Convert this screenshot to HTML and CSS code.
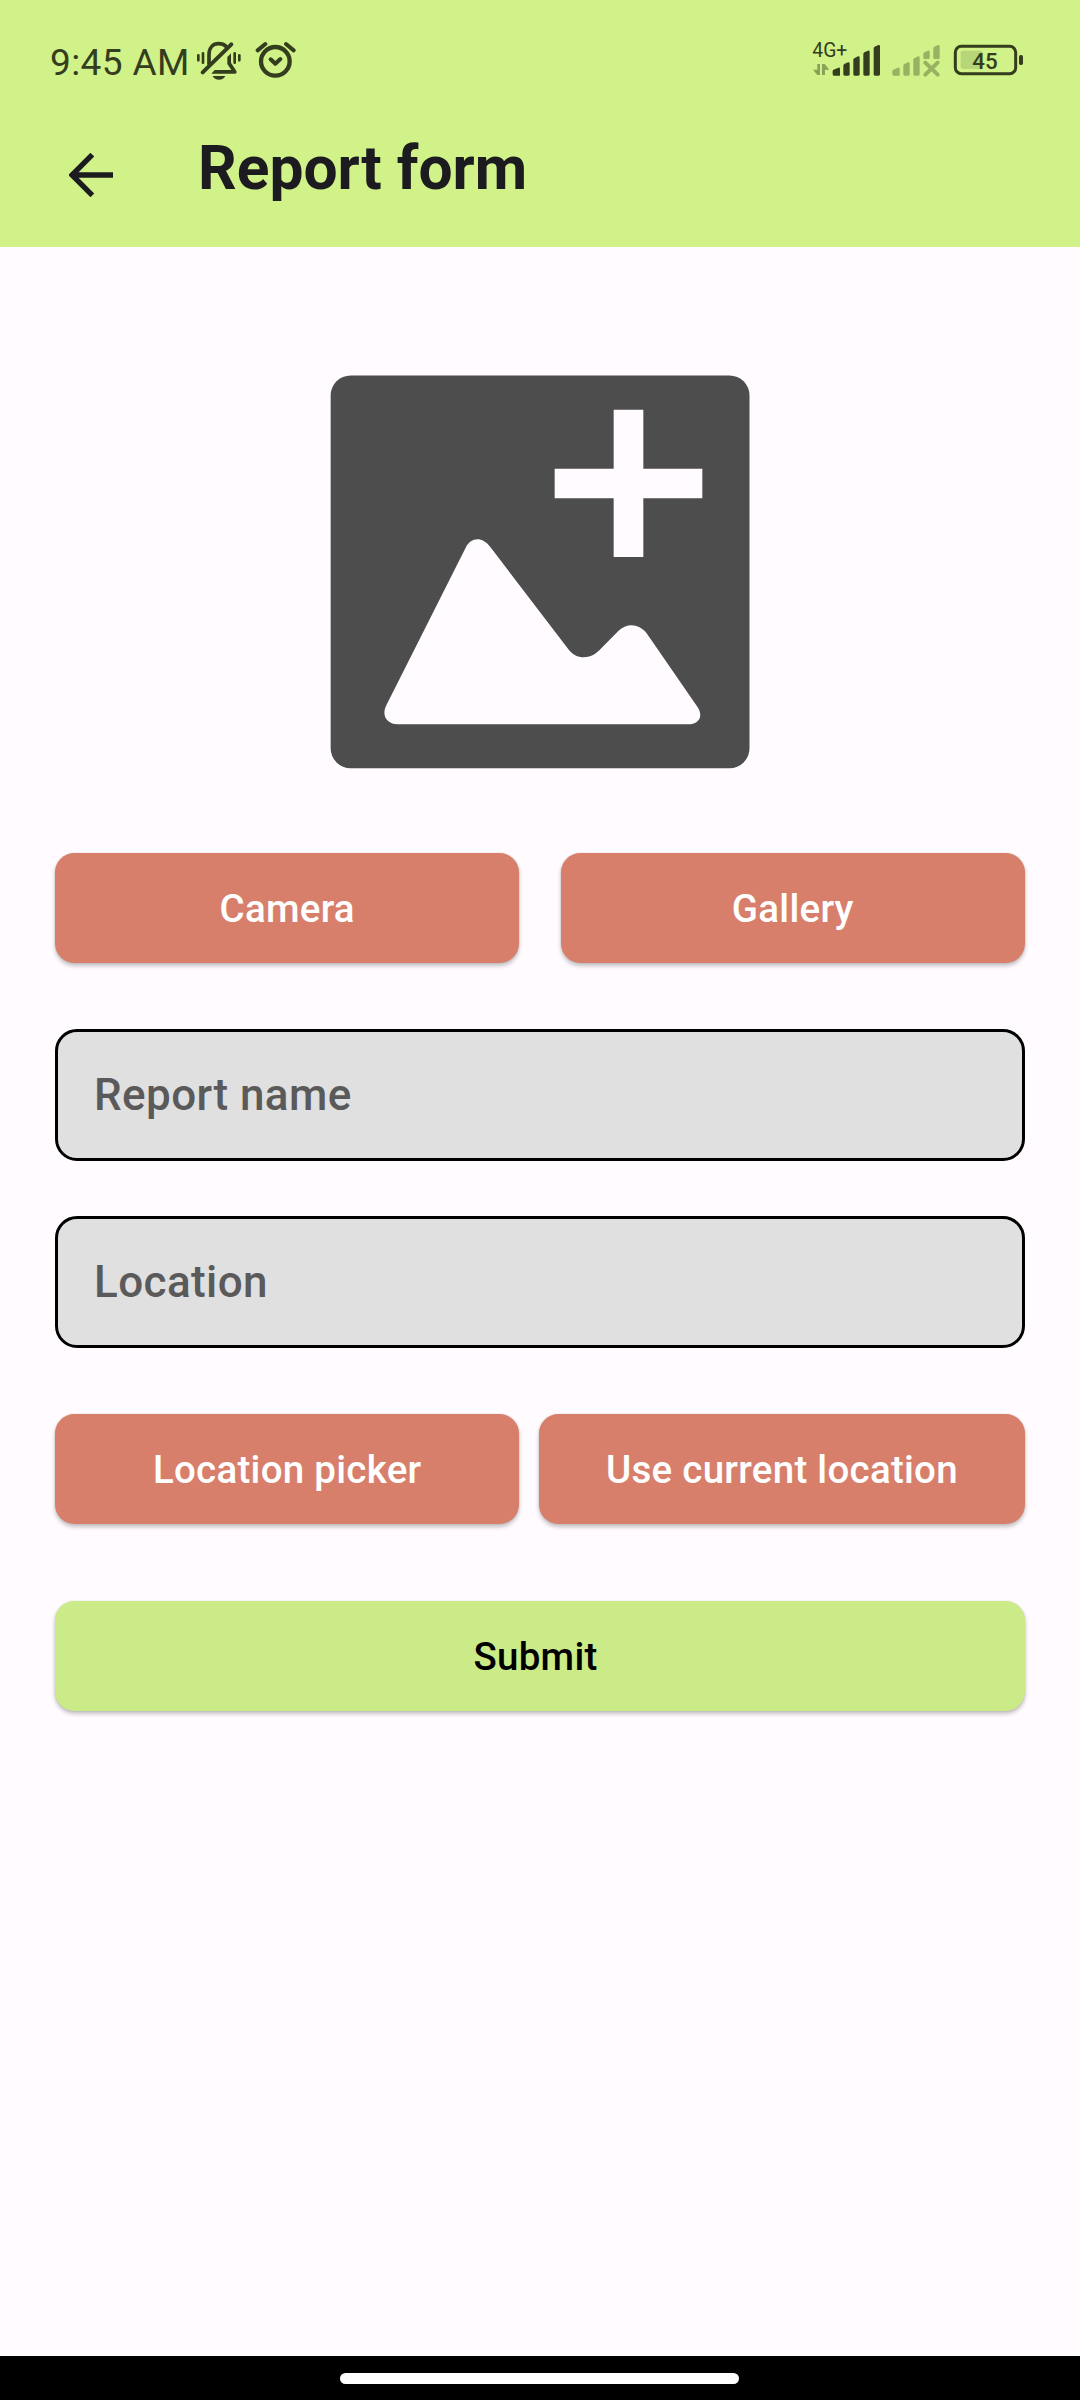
FILE: index.html
```html
<!DOCTYPE html>
<html lang="en">
<head>
<meta charset="utf-8">
<title>Report form</title>
<link rel="stylesheet" href="styles.css">
</head>
<body>
<div class="screen">
  <header class="header">
    <div class="status">
      <div class="status-left">
        <span class="clock">9:45 AM</span>
        <svg class="bell" viewBox="498 60 138 126" fill="none" stroke="currentColor" stroke-width="8" stroke-linecap="round">
          <path d="M505 106V121M519 100V128M614 100V128M628 106V121"/>
          <path d="M537 132V104C537 82 550 71 566 71C576 71 583 74 588 79" stroke-width="11"/>
          <path d="M603 100V128L619 153Q622 161 614 161H544L554 150H604L592 132V111Z" fill="currentColor" stroke="none"/>
          <path d="M518 157L604 73" stroke-width="12"/>
          <path d="M548 168H586C583 175 576 179 567 179C558 179 551 175 548 168Z" fill="currentColor" stroke="none"/>
        </svg>
        <svg class="alarm" viewBox="675 60 126 120" fill="none" stroke="currentColor" stroke-width="13" stroke-linecap="round" stroke-linejoin="round">
          <circle cx="736" cy="124" r="43"/>
          <path d="M722 118L736 131L751 117M683 91L706 72M768 72L791 91" stroke-width="12"/>
        </svg>
      </div>
      <div class="status-right">
        <svg class="signal" viewBox="60 60 216 120" fill="currentColor">
          <text x="67" y="112" font-size="58">4G+</text>
          <path d="M128 153Q128 150 131 149L145 143Q150 142 150 147V167H132Q128 167 128 163ZM160 137Q160 134 163 132L174 127Q179 126 179 131V163Q179 167 175 167H164Q160 167 160 163ZM190 119Q190 116 193 115L204 109Q209 108 209 113V163Q209 167 205 167H194Q190 167 190 163ZM220 102Q220 99 223 97L234 92Q239 91 239 96V163Q239 167 235 167H224Q220 167 220 163ZM251 85Q251 82 254 80L265 75Q270 74 270 79V163Q270 167 266 167H255Q251 167 251 163Z"/>
          <path opacity=".45" d="M82 132H90V165H82L69 149H82ZM96 132H104L118 149H105V165H96Z"/>
        </svg>
        <svg class="signal-off" viewBox="300 60 156 120" fill="currentColor">
          <path d="M307 153Q307 150 310 149L324 143Q329 142 329 147V167H311Q307 167 307 163ZM340 137Q340 134 343 132L354 127Q359 126 359 131V163Q359 167 355 167H344Q340 167 340 163ZM370 119Q370 116 373 115L384 109Q389 108 389 113V163Q389 167 385 167H374Q370 167 370 163ZM400 102Q400 99 403 97L414 92Q419 91 419 96V113Q419 117 415 117H404Q400 117 400 113ZM430 85Q430 82 433 80L444 75Q449 74 449 79V113Q449 117 445 117H434Q430 117 430 113Z"/>
          <path d="M406 128L443 164M443 128L406 164" stroke="currentColor" stroke-width="12" stroke-linecap="round"/>
        </svg>
        <svg class="battery" viewBox="486 60 222 120">
          <rect x="512" y="92" width="66" height="55" rx="8" fill="#b7d579"/>
          <rect x="496" y="79" width="181" height="82" rx="18" fill="none" stroke="currentColor" stroke-width="9"/>
          <rect x="687" y="105" width="12" height="30" rx="5" fill="currentColor"/>
          <text x="547" y="147" font-size="67" font-weight="500" fill="currentColor">45</text>
        </svg>
      </div>
    </div>
    <div class="appbar">
      <svg class="back" viewBox="0 0 132 132" fill="none" stroke="currentColor" stroke-width="16"><path d="M70 5L9 66L70 127M10 66H132"/></svg>
      <h1 class="title">Report form</h1>
    </div>
  </header>
  <main class="form">
    <svg class="photo" viewBox="60 75 1260 1182">
      <rect x="62" y="76.500" width="1256.500" height="1178.500" rx="60" fill="#4d4d4d"/>
      <path fill="#fffbff" d="M911 179H1000V356H1177V445H1000V621H911V445H734V356H911Z"/>
      <path fill="#fffbff" d="M467 593C484 560 517 560 541 591L774 896C797 929 840 930 868 901L925 843C951 818 987 821 1010 850L1161 1069C1184 1101 1163 1123 1135 1123H263C232 1122 213 1098 229 1066Z"/>
    </svg>
    <div class="row row-source">
      <button class="btn">Camera</button>
      <button class="btn">Gallery</button>
    </div>
    <input class="field" type="text" placeholder="Report name">
    <input class="field" type="text" placeholder="Location">
    <div class="row row-location">
      <button class="btn">Location picker</button>
      <button class="btn">Use current location</button>
    </div>
    <button class="btn btn-submit">Submit</button>
  </main>
  <footer class="navbar"><div class="handle"></div></footer>
</div>
</body>
</html>
```
FILE: styles.css
```css
* { box-sizing: border-box; }
body { margin: 0; font-family: Roboto, sans-serif; background: #fffbff; }
.screen { width: 1080px; height: 2400px; display: flex; flex-direction: column; }
.header { height: 247px; background: #d0f288; flex: none; }
.status { height: 120px; padding: 40px 57px 0 50px; display: flex; justify-content: space-between; color: #343d1e; }
.status-left, .status-right { display: flex; align-items: flex-start; }
.clock { width: 146px; margin-top: 1px; font-size: 37px; line-height: 43px; letter-spacing: .4px; white-space: nowrap; }
.bell { width: 46px; height: 42px; }
.alarm { width: 42px; height: 40px; margin-left: 13px; }
.signal { width: 72px; height: 40px; }
.signal-off { width: 52px; height: 40px; margin-left: 8px; color: #98b162; }
.battery { width: 74px; height: 40px; margin-left: 10px; margin-right: -3px; }
.appbar { display: flex; align-items: flex-start; padding: 12px 0 0 69px; color: #1c1b1f; }
.back { width: 44px; height: 44px; margin-top: 21px; }
.title { margin: 1px 0 0 85px; font-size: 60.5px; line-height: 71px; font-weight: 700; }
.form { flex: 1; display: flex; flex-direction: column; padding: 128px 55px 0; }
.photo { width: 420px; height: 394px; margin: 0 0 84px 275px; }
.row { display: grid; }
.row-source { grid-template-columns: 464.400px 464.400px; gap: 41.200px; margin-bottom: 66px; }
.row-location { grid-template-columns: 464.400px 486px; gap: 19.600px; margin: 11px 0 77px; }
.btn { height: 110px; padding: 2px 0 0; border: 0; border-radius: 19.500px; background: #d87f6c; color: #fff; font: 500 38.5px/44px Roboto, sans-serif; letter-spacing: .275px; box-shadow: 0 3px 4px rgba(0, 0, 0, .24), 0 0 2px rgba(0, 0, 0, .12); }
.btn-submit { padding-right: 9px; background: #cbeb88; color: #000; }
.field { height: 132px; margin: 0 0 55px; padding: 0 36px; border: 3px solid #000; border-radius: 22px; background: #e0e0e0; font: 500 44px/52px Roboto, sans-serif; letter-spacing: .4px; outline: 0; }
.field::placeholder { color: #5a5a5a; opacity: 1; }
.navbar { height: 44px; background: #000; display: flex; justify-content: flex-start; align-items: flex-start; padding: 17px 0 0 340px; flex: none; }
.handle { width: 399px; height: 10.500px; border-radius: 5.500px; background: #fff; }
```
